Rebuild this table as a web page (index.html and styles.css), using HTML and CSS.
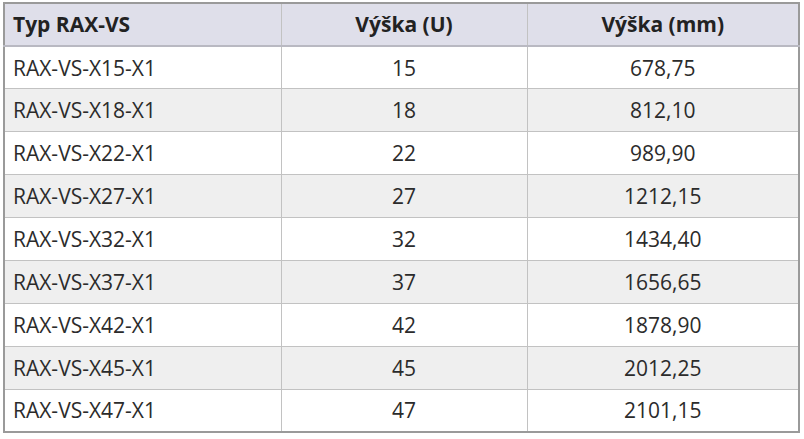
FILE: index.html
```html
<!DOCTYPE html>
<html>
<head>
<meta charset="utf-8">
<link rel="stylesheet" href="styles.css">
</head>
<body>
<table class="spec">
  <colgroup>
    <col class="c1"><col class="c2"><col class="c3">
  </colgroup>
  <thead>
    <tr><th class="left">Typ RAX-VS</th><th>Výška (U)</th><th>Výška (mm)</th></tr>
  </thead>
  <tbody>
    <tr><td class="left">RAX-VS-X15-X1</td><td>15</td><td>678,75</td></tr>
    <tr><td class="left">RAX-VS-X18-X1</td><td>18</td><td>812,10</td></tr>
    <tr><td class="left">RAX-VS-X22-X1</td><td>22</td><td>989,90</td></tr>
    <tr><td class="left">RAX-VS-X27-X1</td><td>27</td><td>1212,15</td></tr>
    <tr><td class="left">RAX-VS-X32-X1</td><td>32</td><td>1434,40</td></tr>
    <tr><td class="left">RAX-VS-X37-X1</td><td>37</td><td>1656,65</td></tr>
    <tr><td class="left">RAX-VS-X42-X1</td><td>42</td><td>1878,90</td></tr>
    <tr><td class="left">RAX-VS-X45-X1</td><td>45</td><td>2012,25</td></tr>
    <tr><td class="left">RAX-VS-X47-X1</td><td>47</td><td>2101,15</td></tr>
  </tbody>
</table>
</body>
</html>
```

FILE: styles.css
```css
html, body {
  margin: 0;
  padding: 0;
  background: #ffffff;
}
body {
  padding: 2px 0 0 3px;
  font-family: "Open Sans", "Noto Sans", sans-serif;
}
.spec {
  border-collapse: collapse;
  width: 795px;
  table-layout: fixed;
  border: 2px solid #9a9a9a;
}
.c1 { width: 277px; }
.c2 { width: 246px; }
.c3 { width: 272px; }
.spec th, .spec td {
  height: 42.9px;
  padding: 0 8px;
  text-align: center;
  font-size: 21px;
  border: 1px solid #c2c2c2;
  box-sizing: border-box;
  white-space: nowrap;
}
.spec th {
  background: #dfdfea;
  color: #222222;
  font-weight: 700;
  border-bottom: 2px solid #b9b9c2;
}
.spec td {
  color: #2b2b2b;
  font-weight: 400;
}
.spec .left {
  text-align: left;
}
.spec tbody tr:nth-child(even) td {
  background: #efefef;
}
```
